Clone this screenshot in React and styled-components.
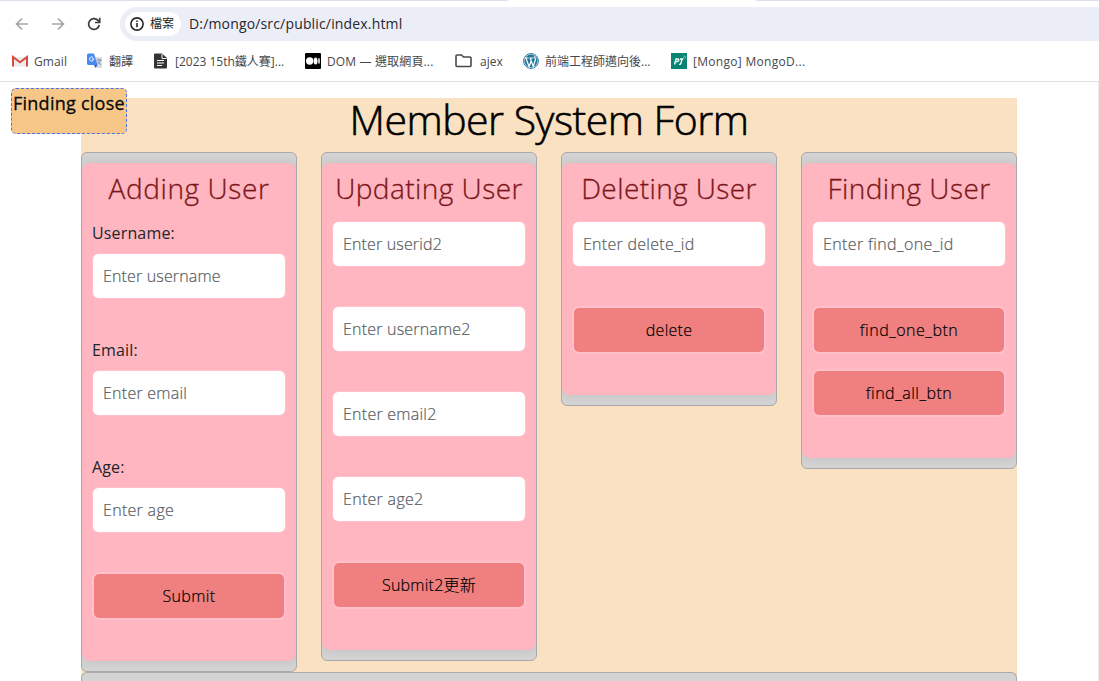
import React from "react";
import styled, { createGlobalStyle } from "styled-components";

const Global = createGlobalStyle`
  * { box-sizing: border-box; }
  html, body { margin: 0; height: 100%; overflow: hidden; background: #fff; }
  body { font-family: "Open Sans", "Noto Sans CJK TC", sans-serif; font-weight: 300; color: #212529; }
`;

const Window = styled.div`
  width: 1099px;
  height: 681px;
  overflow: hidden;
  display: flex;
  flex-direction: column;
`;

const Text = styled.span`
  display: block;
  white-space: nowrap;
  letter-spacing: ${(p) => p.$ls || 0}px;
`;

const TabStrip = styled.div`
  height: 7px;
  display: flex;
  justify-content: space-between;
  background: #fff;
`;

const TabEdge = styled.div`
  width: ${(p) => p.$w}px;
  height: 1px;
  background: #dde1eb;
`;

const Toolbar = styled.div`
  height: 34px;
  display: flex;
  align-items: center;
  padding-left: 14px;
`;

const NavIcon = styled.svg`
  width: 16px;
  height: 16px;
  margin-right: ${(p) => p.$gap}px;
  fill: none;
  stroke: ${(p) => p.$c};
  stroke-width: 1.7;
  flex: none;
`;

const Omnibox = styled.div`
  flex: 1;
  height: 34px;
  border-radius: 17px 0 0 17px;
  background: #ebeef7;
  display: flex;
  align-items: center;
  padding-left: 5px;
  font-size: 14px;
  font-weight: 400;
  color: #27282c;
`;

const Address = styled(Text)`
  padding-bottom: 2px;
`;

const FileChip = styled.div`
  width: 56px;
  height: 24px;
  border-radius: 12px;
  background: #fff;
  display: flex;
  align-items: center;
  gap: 6px;
  padding-left: 5px;
  margin-right: 8px;
  font-size: 12px;
  line-height: 24px;
  color: #1f1f1f;
`;

const Bookmarks = styled.div`
  height: 41px;
  display: flex;
  align-items: center;
  padding-left: 12px;
  border-bottom: 1px solid #dfe0e2;
  font-size: 12px;
  font-weight: 400;
  color: #46484b;
`;

const Bookmark = styled.div`
  width: ${(p) => p.$w}px;
  display: flex;
  align-items: center;
  flex: none;
  gap: ${(p) => p.$gap || 6}px;
  svg { flex: none; display: block; }
`;

const Page = styled.main`
  position: relative;
  flex: 1;
  min-height: 0;
  padding: 16px 0 0 81px;
  border-right: 1px solid #ececec;
`;

const Toggle = styled.div`
  position: absolute;
  left: 11px;
  top: 6px;
  width: 116px;
  height: 46px;
  border: 1px dashed #4b74e8;
  border-radius: 5px;
  background: #f7c78a;
  color: #0a0a0a;
  padding-left: 1px;
  font-size: 18px;
  font-weight: 400;
  line-height: 29px;
  -webkit-text-stroke: 0.3px #0a0a0a;
`;

const Container = styled.div`
  width: 936px;
  height: 583px;
  background: #fae1c1;
  display: flex;
  flex-direction: column;
`;

const PageTitle = styled.h1`
  margin: 0;
  height: 54px;
  display: flex;
  justify-content: center;
  font-size: 41px;
  font-weight: 300;
  line-height: 43px;
  color: #000;
  -webkit-text-stroke: 0.6px #000;
`;

const Columns = styled.div`
  display: flex;
  align-items: flex-start;
  justify-content: space-between;
`;

const Card = styled.section`
  width: 216px;
  padding: 10px 0;
  border: 1px solid #a9a9a9;
  border-radius: 6px;
  background: #d3d3d3;
  overflow: hidden;
`;

const Form = styled.div`
  height: ${(p) => p.$h}px;
  padding: 0 10px;
  border-radius: 8px;
  background: #ffb6c1;
  box-shadow: 0 0 10px rgba(0, 0, 0, 0.1);
`;

const FormTitle = styled.h2`
  margin: 0;
  height: ${(p) => (p.$labelled ? 57 : 58)}px;
  display: flex;
  justify-content: center;
  font-size: 28px;
  font-weight: 300;
  line-height: 51px;
  color: #7c161b;
  -webkit-text-stroke: 0.3px #7c161b;
`;

const Field = styled.div`
  margin-bottom: ${(p) => (p.$labelled ? 38 : 39)}px;
  &:last-of-type { margin-bottom: 39px; }
`;

const Label = styled.label`
  display: block;
  height: 33px;
  font-size: 16px;
  font-weight: 400;
  line-height: 27px;
  letter-spacing: 0.15px;
`;

const Input = styled.div`
  height: 46px;
  padding: 0 10px;
  border: 1px solid #ffc0cb;
  border-radius: 6px;
  background: #fff;
  background-clip: padding-box;
  font-size: 16px;
  line-height: 44px;
  color: #595c5f;
  -webkit-text-stroke: 0.2px #595c5f;
`;

const Button = styled.button`
  display: block;
  width: 100%;
  height: 48px;
  margin: 0 0 15px;
  padding: 0;
  border: 2px solid #ffc0cb;
  border-radius: 7px;
  background: #f08080;
  font: inherit;
  font-size: 16px;
  line-height: 44px;
  text-align: center;
  color: #000;
  -webkit-text-stroke: 0.2px #000;
`;

const ResultPanel = styled.section`
  flex: 1;
  border: 1px solid #a9a9a9;
  border-bottom: 0;
  border-radius: 6px 6px 0 0;
  background: #d3d3d3;
`;

const forms = [
  {
    title: "Adding User", ls: 0.6, h: 498, labelled: true,
    fields: [
      { label: "Username:", hint: "Enter username", ls: 0.15 },
      { label: "Email:", hint: "Enter email", ls: 0.25 },
      { label: "Age:", hint: "Enter age", ls: 0.3 },
    ],
    buttons: [{ text: "Submit", ls: 0.4 }],
  },
  {
    title: "Updating User", ls: 0.45, h: 487,
    fields: [
      { hint: "Enter userid2", ls: 0.15 },
      { hint: "Enter username2", ls: 0.2 },
      { hint: "Enter email2", ls: 0.25 },
      { hint: "Enter age2", ls: 0.3 },
    ],
    buttons: [{ text: "Submit2更新", ls: 0.25 }],
  },
  {
    title: "Deleting User", ls: 0.4, h: 232,
    fields: [{ hint: "Enter delete_id", ls: 0.28 }],
    buttons: [{ text: "delete", ls: 0.25 }],
  },
  {
    title: "Finding User", ls: 0.45, h: 295,
    fields: [{ hint: "Enter find_one_id", ls: 0.38 }],
    buttons: [{ text: "find_one_btn", ls: 0.5 }, { text: "find_all_btn", ls: 0.5 }],
  },
];

const GmailIcon = () => (
  <svg width="16" height="16" viewBox="0 0 16 16">
    <path d="M2 4h12v9.500H2z" fill="#ececec" />
    <path d="M1 13.500V4L8 9.300 15 4v9.500" fill="none" stroke="#d94a3d" strokeWidth="2" />
  </svg>
);

const TranslateIcon = () => (
  <svg width="16" height="16" viewBox="0 0 16 16">
    <path d="M6 4h8.500l.5 1v9l-1 1H9z" fill="#dadce0" />
    <path d="M1 0.500h6l3.500 11.500H1L0 11V1.500z" fill="#4588f0" />
    <path d="M7 12h3.500L8.500 15z" fill="#2b5fc5" />
    <path d="M6.800 5.900H4.900M6.800 5.900a2.100 2.100 0 1 1-.7-1.500" fill="none" stroke="#fff" strokeWidth="1" />
    <path d="M9.500 7h5M12 6v1M13.500 7c-.5 2-2 3.500-3 4M10.500 8.500c1 1.500 2 2.500 3.500 3" fill="none" stroke="#6c87a8" strokeWidth=".9" />
  </svg>
);

const DocIcon = () => (
  <svg width="13" height="16" viewBox="0 0 13 16">
    <path d="M0 1.500Q0 .5 1 .5h7L13 5v9.500q0 1-1 1H1q-1 0-1-1z" fill="#333435" />
    <path d="M8 1v4.500h4.500" fill="none" stroke="#fff" strokeWidth="1" />
    <path d="M3 7.500h7M3 10h7M3 12.500h5" stroke="#fff" strokeWidth="1.100" />
  </svg>
);

const MediumIcon = () => (
  <svg width="16" height="16" viewBox="0 0 16 16">
    <rect width="16" height="16" rx="1" fill="#000" />
    <circle cx="4.700" cy="8" r="3.700" fill="#fff" />
    <ellipse cx="10.600" cy="8" rx="1.900" ry="3.600" fill="#fff" />
    <ellipse cx="14" cy="8" rx=".8" ry="3.300" fill="#fff" />
  </svg>
);

const FolderIcon = () => (
  <svg width="17" height="14" viewBox="0 0 17 14" fill="none" stroke="#47494b" strokeWidth="1.600">
    <path d="M1 2q0-1 1-1h4.500l2 2H15q1 0 1 1v7.500q0 1-1 1H2q-1 0-1-1z" />
  </svg>
);

const WordPressIcon = () => (
  <svg width="16" height="16" viewBox="0 0 16 16">
    <circle cx="8" cy="8" r="7.400" fill="#fff" stroke="#21759b" strokeWidth="1" />
    <circle cx="8" cy="8" r="6.500" fill="#21759b" />
    <path d="M1.800 5h3.700M6.400 5h4M2.900 5l3.200 8.500L8.200 8M7.200 5l3 8.500 2.200-6.700c.5-1.600-1.300-2.300-.9-3.600" fill="none" stroke="#fff" strokeWidth="1.200" />
  </svg>
);

const PjIcon = () => (
  <svg width="16" height="16" viewBox="0 0 16 16">
    <rect width="16" height="16" fill="#0b8473" />
    <path d="M3.500 11.500 5 6h1.700q1.500.2 1 1.600-.5 1.300-2.900 1.200M9 6h3.200M11 6l-1 4q-.4 1.700-2 1.300" fill="none" stroke="#fff" strokeWidth="1.300" />
    <path d="M12 4.500q1.200.1 1.200 1.300M12.500 2.800q2.200.2 2.300 2.500" fill="none" stroke="#9fd0c8" strokeWidth=".8" />
  </svg>
);

const bookmarks = [
  { icon: <GmailIcon />, text: "Gmail", w: 75, ls: 0.1 },
  { icon: <TranslateIcon />, text: "翻譯", w: 67 },
  { icon: <DocIcon />, text: "[2023 15th鐵人賽]...", w: 151, gap: 8 },
  { icon: <MediumIcon />, text: "DOM — 選取網頁...", w: 150, ls: 0.15 },
  { icon: <FolderIcon />, text: "ajex", w: 68, gap: 8 },
  { icon: <WordPressIcon />, text: "前端工程師邁向後...", w: 148 },
  { icon: <PjIcon />, text: "[Mongo] MongoD...", w: 150, ls: 0.3 },
];

export default function App() {
  return (
    <Window>
      <Global />
      <TabStrip>
        <TabEdge $w={508} />
        <TabEdge $w={343} />
      </TabStrip>
      <Toolbar>
        <NavIcon $c="#a5a6a8" $gap={20} viewBox="0 0 16 16"><path d="M14 8H3M8 2.500 2.500 8 8 13.500" /></NavIcon>
        <NavIcon $c="#a5a6a8" $gap={20} viewBox="0 0 16 16"><path d="M2 8h11M8 2.500 13.500 8 8 13.500" /></NavIcon>
        <NavIcon $c="#3c3d40" $gap={18} viewBox="0 0 16 16"><path d="M13.300 9a5.400 5.400 0 1 1-1.300-4.600L13.500 6M13.700 1.800v4.700H9" /></NavIcon>
        <Omnibox>
          <FileChip>
            <svg width="14" height="14" viewBox="0 0 14 14" fill="none" stroke="#27282c" strokeWidth="1.600">
              <circle cx="7" cy="7" r="6.100" />
              <path d="M7 6v4.300M7 3.500v1.500" />
            </svg>
            <Text>檔案</Text>
          </FileChip>
          <Address $ls={0.16}>D:/mongo/src/public/index.html</Address>
        </Omnibox>
      </Toolbar>
      <Bookmarks>
        {bookmarks.map((b) => (
          <Bookmark key={b.text} $w={b.w} $gap={b.gap}>
            {b.icon}
            <Text $ls={b.ls}>{b.text}</Text>
          </Bookmark>
        ))}
      </Bookmarks>
      <Page>
        <Container>
          <PageTitle><Text $ls={-0.5}>Member System Form</Text></PageTitle>
          <Columns>
            {forms.map((f) => (
              <Card key={f.title}>
                <Form $h={f.h}>
                  <FormTitle $labelled={f.labelled}><Text $ls={f.ls}>{f.title}</Text></FormTitle>
                  {f.fields.map((x) => (
                    <Field key={x.hint} $labelled={f.labelled}>
                      {x.label && <Label>{x.label}</Label>}
                      <Input><Text $ls={x.ls}>{x.hint}</Text></Input>
                    </Field>
                  ))}
                  {f.buttons.map((b) => (
                    <Button key={b.text} type="button"><Text $ls={b.ls}>{b.text}</Text></Button>
                  ))}
                </Form>
              </Card>
            ))}
          </Columns>
          <ResultPanel />
        </Container>
        <Toggle><Text $ls={0.25}>Finding close</Text></Toggle>
      </Page>
    </Window>
  );
}
